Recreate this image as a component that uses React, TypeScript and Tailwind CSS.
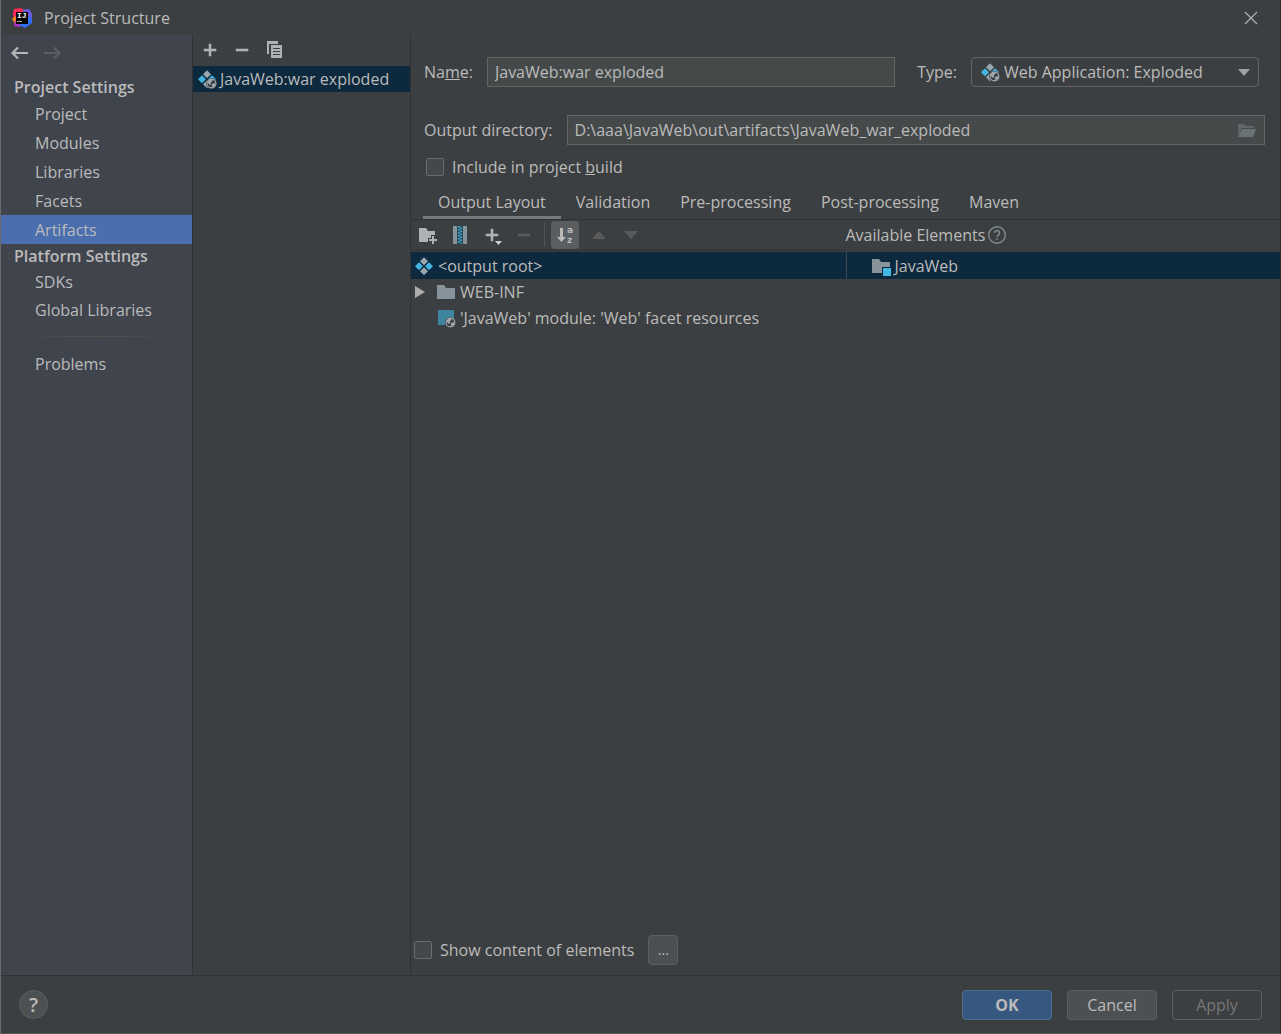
import React, { useState } from 'react';

const settings = ['Project', 'Modules', 'Libraries', 'Facets', 'Artifacts'];
const platform = ['SDKs', 'Global Libraries'];
const tabs = ['Output Layout', 'Validation', 'Pre-processing', 'Post-processing', 'Maven'];

function AppLogo() {
  return (
    <svg width="20" height="20" viewBox="0 0 20 20" aria-hidden="true">
      <path d="M2 1 8 0l5 2-2 8-9 1L1 6Z" fill="#fe2857" />
      <path d="M0 11 3 8l3 4-3 4Z" fill="#fc801d" />
      <path d="m3 13 6-1 3 4-5 3-5-1Z" fill="#b12ec4" />
      <path d="m11 2 6-1 3 5v9l-7 5-6-3 5-5Z" fill="#2f6ff0" />
      <path d="m12 2 5-1 3 5v5l-5-4Z" fill="#6a57dc" />
      <rect x="4" y="4" width="12" height="12" fill="#000" />
      <text x="5" y="10" fontSize="8" fontWeight="700" fontFamily="Liberation Mono, monospace" fill="#fff">IJ</text>
      <rect x="5" y="13" width="5" height="1" fill="#aaa" />
    </svg>
  );
}

function Globe() {
  return (
    <>
      <circle cx="14.500" cy="14.500" r="5.500" fill="#3c3f41" />
      <circle cx="14.500" cy="14.500" r="4.400" fill="none" stroke="#a4adb3" strokeWidth="1.100" />
      <path d="M10.500 13c1-2 3-3 5.200-2.400l-.6 1.800-1.800.6 1 1.400-.4 1.200-1.700-.2Z" fill="#a4adb3" />
      <path d="m15.800 14.600 2.600-.4c0 2-1 3.400-2.600 4l-1.200-1.600Z" fill="#a4adb3" />
    </>
  );
}

function ArtifactIcon({ web = false }: { web?: boolean }) {
  return (
    <svg width="20" height="20" viewBox="0 0 20 20" className="shrink-0" aria-hidden="true">
      <path d="m10 1.200 4 4-4 4-4-4Z" fill="#9aa7b0" />
      <path d="m5 6.200 4 4-4 4-4-4Z" fill="#40b6e0" />
      <path d="m15 6.200 4 4-4 4-4-4Z" fill="#40b6e0" />
      <path d="m10 11.200 4 4-4 4-4-4Z" fill="#9aa7b0" />
      {web && <Globe />}
    </svg>
  );
}

function FolderIcon({ module = false }: { module?: boolean }) {
  return (
    <svg width="20" height="20" viewBox="0 0 20 20" className="shrink-0" aria-hidden="true">
      <path d="M1 3h7l2 3h9v11H1Z" fill="#87939a" />
      {module && <path d="M11 11h9v9h-9Z" fill="#0d293e" />}
      {module && <path d="M12 12h8v8h-8Z" fill="#40b6e0" />}
    </svg>
  );
}

function FacetIcon() {
  return (
    <svg width="20" height="20" viewBox="0 0 20 20" className="shrink-0" aria-hidden="true">
      <path d="M2 2h16v15H2Z" fill="#3e86a0" />
      <Globe />
    </svg>
  );
}

function Plus({ menu = false }: { menu?: boolean }) {
  return (
    <svg width="20" height="20" viewBox="0 0 20 20" aria-hidden="true">
      <path d="M9 4h2v5h5v2h-5v5H9v-5H4V9h5Z" fill="#afb1b3" stroke="#afb1b3" strokeWidth=".6" />
      {menu && <path d="M13 16h7l-3.500 4Z" fill="#d0d0d0" />}
    </svg>
  );
}

function Minus({ color }: { color: string }) {
  return (
    <svg width="20" height="20" viewBox="0 0 20 20" aria-hidden="true">
      <path d="M4 9h12v2H4Z" fill={color} stroke={color} strokeWidth=".6" />
    </svg>
  );
}

function IconButton({ label, children, disabled }: { label: string; children: React.ReactNode; disabled?: boolean }) {
  return (
    <button aria-label={label} disabled={disabled} className="flex h-7 w-8 shrink-0 items-center justify-center">
      {children}
    </button>
  );
}

function Check({ id, children }: { id: string; children: React.ReactNode }) {
  return (
    <div className="flex items-center gap-2">
      <input id={id} type="checkbox" className="size-[18px] appearance-none rounded-xs border border-[#6b6b6b] bg-[#43494a] checked:bg-[#4b6eaf]" />
      <label htmlFor={id}>{children}</label>
    </div>
  );
}

export default function App() {
  const [page, setPage] = useState('Artifacts');
  const [tab, setTab] = useState(tabs[0]);
  const [name, setName] = useState('JavaWeb:war exploded');
  const [dir, setDir] = useState('D:\\aaa\\JavaWeb\\out\\artifacts\\JavaWeb_war_exploded');

  const navItem = (item: string, height = 'h-[29px]') => (
    <button
      key={item}
      onClick={() => setPage(item)}
      className={`flex w-full items-center pl-[34px] text-left ${height} ${item === page ? 'bg-[#4b6eaf]' : ''}`}
    >{item}</button>
  );

  return (
    <div className="flex h-screen flex-col border-r border-b border-l border-r-[#2b2b2b] border-b-[#5a5a5a] border-l-[#6b6b6b] bg-[#3c3f41] font-['Open_Sans','Noto_Sans',sans-serif] text-base leading-6 text-[#bbbbbb]">
      <header className="flex h-[35px] shrink-0 items-center gap-3 pr-[19px] pl-[11px]">
        <AppLogo />
        <h1 className="mr-auto">Project Structure</h1>
        <button aria-label="Close">
          <svg width="20" height="20" viewBox="0 0 20 20" aria-hidden="true">
            <path d="m4 4 12 12M16 4 4 16" stroke="#afb1b3" strokeWidth="1.200" />
          </svg>
        </button>
      </header>

      <div className="flex min-h-0 flex-1">
        <nav className="w-48 shrink-0 border-r border-[#323232] bg-[#40444d]">
          <div className="flex h-10 items-center gap-3 px-2 pb-1">
            <button aria-label="Back">
              <svg width="20" height="20" viewBox="0 0 20 20" aria-hidden="true">
                <path d="M9 4.500 3.500 10 9 15.500M3.500 10H19" fill="none" stroke="#b4b6b8" strokeWidth="2.200" />
              </svg>
            </button>
            <button aria-label="Forward" disabled>
              <svg width="20" height="20" viewBox="0 0 20 20" aria-hidden="true">
                <path d="m13 4.500 5.500 5.500-5.500 5.500M18.500 10H3" fill="none" stroke="#5c5e61" strokeWidth="2.200" />
              </svg>
            </button>
          </div>
          <h2 className="h-6 pl-[13px] font-semibold">Project Settings</h2>
          {settings.map(item => navItem(item))}
          <h2 className="h-6 pl-[13px] font-semibold">Platform Settings</h2>
          {platform.map(item => navItem(item, 'h-7'))}
          <div className="mx-3 my-3 h-px bg-linear-to-r from-transparent via-[#55504e] to-transparent" />
          {navItem('Problems')}
        </nav>

        <section className="w-[218px] shrink-0 border-r border-[#323232]">
          <div className="flex h-[31px] items-center pb-0.5 pl-px">
            <IconButton label="Add artifact"><Plus /></IconButton>
            <IconButton label="Remove artifact"><Minus color="#afb1b3" /></IconButton>
            <IconButton label="Copy artifact">
              <svg width="20" height="20" viewBox="0 0 20 20" aria-hidden="true">
                <path d="M3 1h11v3H5v10H3Z" fill="#afb1b3" />
                <path d="M7 5h11v13H7Z" fill="#afb1b3" />
                <path d="M9 8.500h7M9 11.500h7M9 14.500h7" stroke="#3c3f41" />
              </svg>
            </IconButton>
          </div>
          <button className="flex h-[26px] w-full items-center gap-[3px] bg-[#0d293e] pl-1 whitespace-nowrap">
            <ArtifactIcon web />JavaWeb:war exploded
          </button>
        </section>

        <main className="flex min-w-0 flex-1 flex-col">
          <div className="flex items-center pt-[22px] pr-[21px] pl-[13px]">
            <label htmlFor="name">Na<u>m</u>e:</label>
            <input
              id="name"
              value={name}
              onChange={e => setName(e.target.value)}
              className="ml-[14px] h-[30px] min-w-0 flex-1 border border-[#646464] bg-[#45494a] px-[7px] outline-none"
            />
            <label htmlFor="type" className="ml-[22px]">Type:</label>
            <div className="ml-[14px] flex h-[30px] w-72 items-center rounded-sm border border-[#646464] px-2">
              <ArtifactIcon web />
              <select id="type" className="ml-1 flex-1 appearance-none outline-none">
                <option>Web Application: Exploded</option>
              </select>
              <svg width="12" height="7" viewBox="0 0 12 7" aria-hidden="true"><path d="M0 0h12L6 7Z" fill="#a0a2a4" /></svg>
            </div>
          </div>

          <div className="mt-7 flex items-center pr-[15px] pl-[13px]">
            <label htmlFor="dir">Output directory:</label>
            <div className="ml-[14px] flex h-[30px] flex-1 items-center border border-[#646464] bg-[#45494a] px-[7px]">
              <input id="dir" value={dir} onChange={e => setDir(e.target.value)} className="min-w-0 flex-1 outline-none" />
              <button aria-label="Browse">
                <svg width="20" height="20" viewBox="0 0 20 20" aria-hidden="true">
                  <path d="M1 4h6l2 2h8v2H5l-4 8Z" fill="#5f6669" />
                  <path d="M5 9h14l-3 8H1Z" fill="#6a7275" />
                </svg>
              </button>
            </div>
          </div>

          <div className="mt-[10px] pl-[15px]">
            <Check id="include">Include in project <u>b</u>uild</Check>
          </div>

          <div role="tablist" className="mt-2 flex border-b border-[#323232] pl-3">
            {tabs.map(t => (
              <button
                key={t}
                role="tab"
                aria-selected={t === tab}
                onClick={() => setTab(t)}
                className={`h-8 border-b-3 px-[15px] ${t === tab ? 'border-[#747a80]' : 'border-transparent'}`}
              >{t}</button>
            ))}
          </div>

          <div className="flex min-h-0 flex-1">
            <section className="flex-1">
              <div className="flex h-[31px] items-center border-b border-[#323232] pl-px">
                <IconButton label="Create directory">
                  <svg width="20" height="20" viewBox="0 0 20 20" aria-hidden="true">
                    <path d="M1 3h7l2 3h7v4h-4v3h-3v4H1Z" fill="#afb1b3" />
                    <path d="M14 11h2v3h3v2h-3v3h-2v-3h-3v-2h3Z" fill="#afb1b3" />
                  </svg>
                </IconButton>
                <IconButton label="Create archive">
                  <svg width="20" height="20" viewBox="0 0 20 20" aria-hidden="true">
                    <path d="M3 1h4v18H3ZM13 1h4v18h-4Z" fill="#87939a" />
                    <path d="M7 1h6v18H7Z" fill="#2b4a57" />
                    <path d="M9 1v18M11 2.500v16" stroke="#40a6cc" strokeWidth="2" strokeDasharray="1.500 1.500" />
                  </svg>
                </IconButton>
                <IconButton label="Add copy of"><Plus menu /></IconButton>
                <IconButton label="Remove" disabled><Minus color="#5a5c5e" /></IconButton>
                <div className="mr-1.5 ml-1 h-6 w-px bg-[#515151]" />
                <button aria-label="Sort elements" className="flex size-7 items-center justify-center rounded-sm bg-[#5a5e60]">
                  <svg width="20" height="20" viewBox="0 0 20 20" aria-hidden="true">
                    <path d="M5 3h3v9h3l-4.500 5L2 12h3Z" fill="#bbbbbb" />
                    <text x="12" y="8" fontSize="9" fontWeight="700" fontFamily="DejaVu Sans, sans-serif" fill="#bbbbbb">a</text>
                    <text x="12" y="18" fontSize="9" fontWeight="700" fontFamily="DejaVu Sans, sans-serif" fill="#bbbbbb">z</text>
                  </svg>
                </button>
                <div className="w-1" />
                <IconButton label="Move up" disabled>
                  <svg width="14" height="8" viewBox="0 0 14 8" aria-hidden="true"><path d="M0 8h14L7 0Z" fill="#5a5a5a" /></svg>
                </IconButton>
                <IconButton label="Move down" disabled>
                  <svg width="14" height="8" viewBox="0 0 14 8" aria-hidden="true"><path d="M0 0h14L7 8Z" fill="#5a5a5a" /></svg>
                </IconButton>
              </div>
              <ul role="tree" className="pt-px">
                <li role="treeitem" aria-selected="true" className="flex h-[27px] items-center gap-1 bg-[#0d293e] pl-[3px]">
                  <ArtifactIcon />&lt;output root&gt;
                </li>
                <li role="treeitem" aria-selected="false" className="flex h-[26px] items-center gap-1 pl-1">
                  <svg width="10" height="12" viewBox="0 0 10 12" className="mr-[7px]" aria-hidden="true"><path d="M0 0v12l10-6Z" fill="#adadad" /></svg>
                  <FolderIcon />WEB-INF
                </li>
                <li role="treeitem" aria-selected="false" className="flex h-[26px] items-center gap-1 pl-[25px]">
                  <FacetIcon />'JavaWeb' module: 'Web' facet resources
                </li>
              </ul>
            </section>

            <section className="flex-1">
              <div className="flex h-8 items-center gap-0.5 pb-0.5">
                Available Elements
                <button aria-label="About available elements">
                  <svg width="20" height="20" viewBox="0 0 20 20" aria-hidden="true">
                    <circle cx="10" cy="10" r="8.300" fill="none" stroke="#7f8b91" strokeWidth="1.400" />
                    <path d="M7.500 8a2.500 2.500 0 1 1 3.800 2.100c-.9.600-1.300.900-1.300 2" fill="none" stroke="#7f8b91" strokeWidth="1.500" />
                    <path d="M9.200 13.200h1.600v1.600H9.200Z" fill="#7f8b91" />
                  </svg>
                </button>
              </div>
              <div className="flex h-[27px] items-center gap-1 border-l border-[#3c4a54] bg-[#0d293e] pl-6">
                <FolderIcon module />JavaWeb
              </div>
            </section>
          </div>

          <div className="flex items-center gap-[14px] pb-[10px] pl-[3px]">
            <Check id="show">Show content of elements</Check>
            <button className="size-[30px] rounded-sm border border-[#5e6060] bg-[#4c5052] text-sm">...</button>
          </div>
        </main>
      </div>

      <footer className="flex h-[58px] shrink-0 items-center gap-[15px] border-t border-[#323232] px-[18px]">
        <button aria-label="Help" className="mr-auto flex size-[29px] items-center justify-center rounded-full border border-[#5e6060] bg-[#4c5052] text-xl font-semibold">?</button>
        <button className="h-[30px] w-[90px] rounded-sm border border-[#4c708c] bg-[#365880] font-bold">OK</button>
        <button className="h-[30px] w-[90px] rounded-sm border border-[#5e6060] bg-[#4c5052]">Cancel</button>
        <button disabled className="h-[30px] w-[90px] rounded-sm border border-[#5e6060] text-[#777777]">Apply</button>
      </footer>
    </div>
  );
}
